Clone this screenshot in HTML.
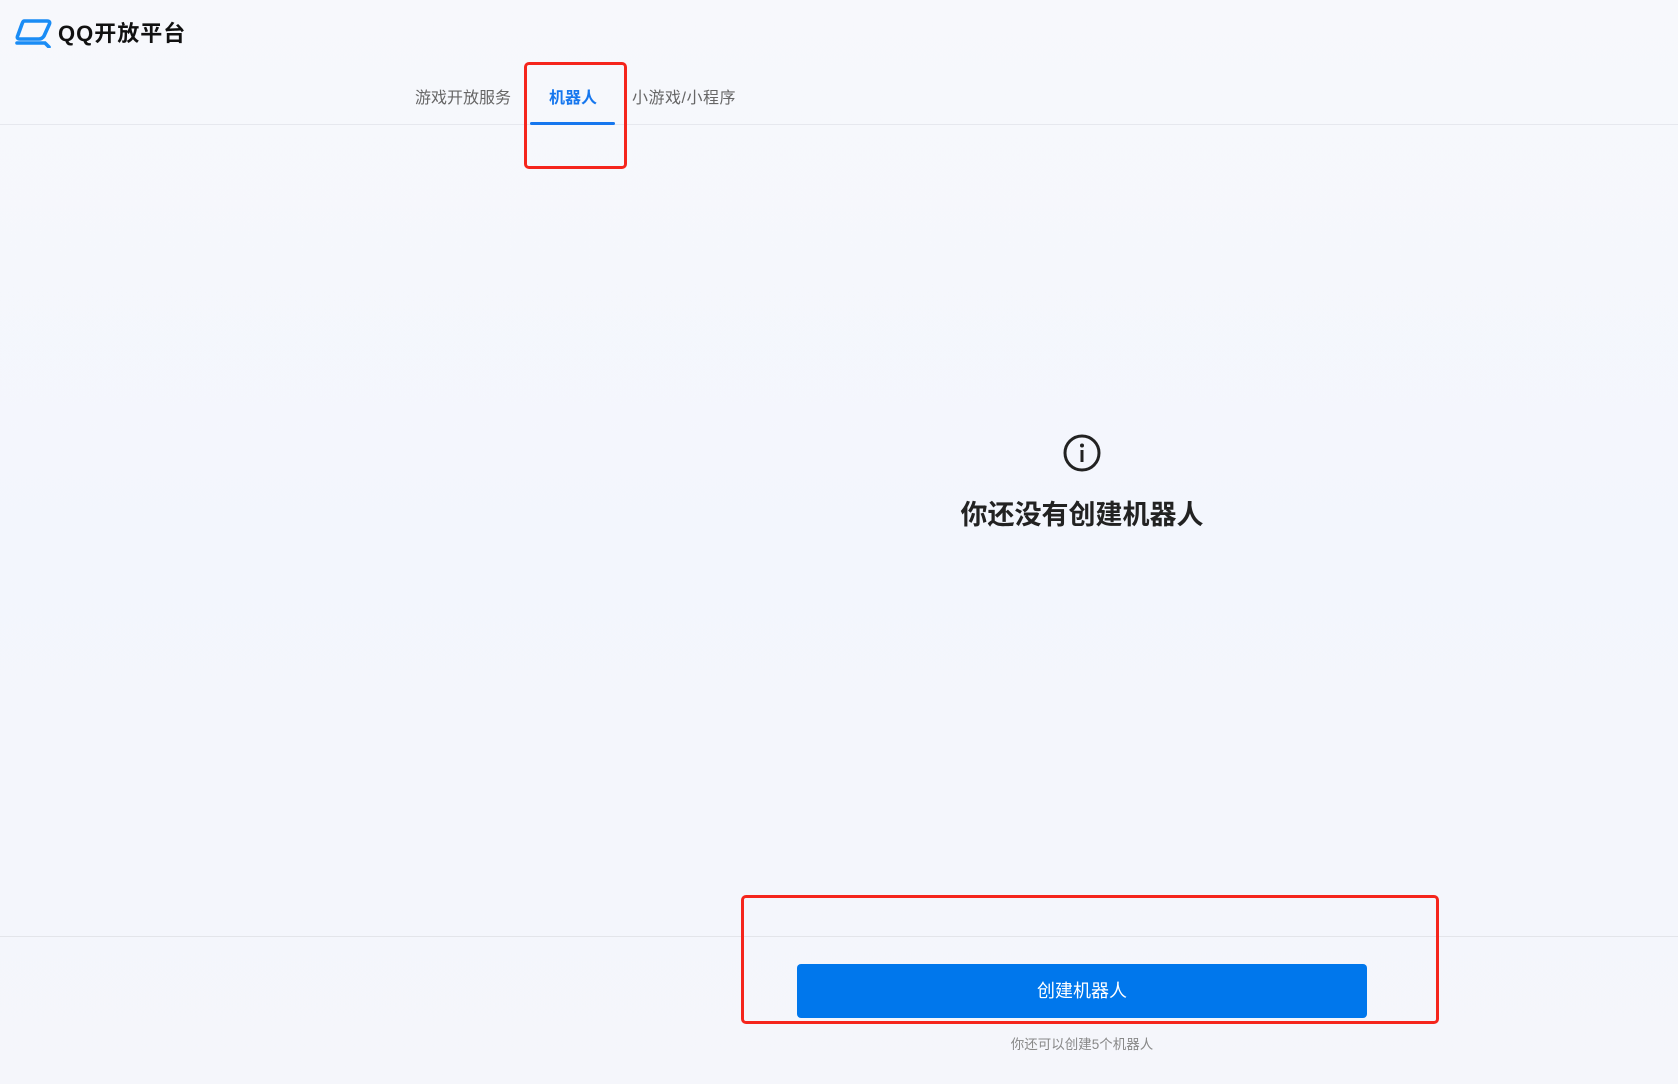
<!DOCTYPE html>
<html><head><meta charset="utf-8"><style>
*{margin:0;padding:0;box-sizing:border-box}
body{width:1678px;height:1084px;overflow:hidden;background:linear-gradient(180deg,#f7f8fc 0%,#f3f6fd 50%,#f5f6fb 100%);font-family:"Liberation Sans","Noto Sans CJK SC",sans-serif;position:relative}
.abs{position:absolute}
.tab{position:absolute;top:88px;font-size:16px;line-height:22px;color:#666;white-space:nowrap}
.red{position:absolute;border:3px solid #f5251c;border-radius:5px}
</style></head><body>
<svg class="abs" style="left:14px;top:18px" width="40" height="30" viewBox="0 0 40 30">
<path d="M10 3 H33 Q37 3 35 7 L30 18 Q28 21 25 21 H6 Q2 21 4 17 L8 6 Q9 3 10 3 Z" fill="none" stroke="#1a8cf5" stroke-width="3.6" stroke-linejoin="round"/>
<path d="M3 25 H31 L35 29" fill="none" stroke="#1a8cf5" stroke-width="3.6" stroke-linecap="round"/>
</svg>
<div class="abs" style="left:58px;top:21px;font-size:22px;line-height:26px;font-weight:bold;color:#111;letter-spacing:1px">QQ开放平台</div>
<div class="tab" style="left:415px">游戏开放服务</div>
<div class="tab" style="left:549px;color:#1677ee;font-weight:bold">机器人</div>
<div class="tab" style="left:632px;letter-spacing:0.5px">小游戏/小程序</div>
<div class="abs" style="left:0;top:124px;width:1678px;height:1px;background:#e6e8ee"></div>
<div class="abs" style="left:530px;top:122px;width:85px;height:3px;border-radius:2px;background:#1677ee"></div>
<div class="red" style="left:524px;top:62px;width:103px;height:107px"></div>
<svg class="abs" style="left:1062px;top:433px" width="40" height="40" viewBox="0 0 40 40">
<circle cx="20" cy="20" r="17" fill="none" stroke="#222" stroke-width="3"/>
<circle cx="20" cy="12.5" r="2" fill="#222"/>
<rect x="18.5" y="17" width="3" height="12" fill="#222"/>
</svg>
<div class="abs" style="left:0;width:2164px;top:497px;text-align:center;font-size:27px;line-height:36px;font-weight:bold;color:#222">你还没有创建机器人</div>
<div class="abs" style="left:0;top:936px;width:1678px;height:1px;background:#e3e5ea"></div>
<div class="abs" style="left:797px;top:964px;width:570px;height:54px;background:#0077ec;border-radius:4px;color:#fff;font-size:18px;line-height:54px;text-align:center">创建机器人</div>
<div class="red" style="left:741px;top:895px;width:698px;height:129px"></div>
<div class="abs" style="left:797px;width:570px;top:1036px;text-align:center;font-size:13.5px;line-height:18px;color:#888">你还可以创建5个机器人</div>
</body></html>
